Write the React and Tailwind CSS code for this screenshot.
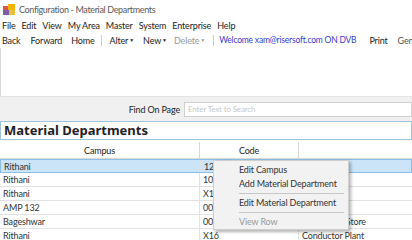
import React from "react";

const rows = [
  ["Rithani", "123", ""],
  ["Rithani", "101", ""],
  ["Rithani", "X11", ""],
  ["AMP 132", "0001", ""],
  ["Bageshwar", "002", "Bageshwar Store"],
  ["Rithani", "X16", "Conductor Plant"],
];

export default function App() {
  return (
    <div className="relative w-[412px] h-[240px] overflow-hidden bg-white text-[#222] font-['Lato','Noto_Sans',sans-serif] text-[9px] tracking-[-0.15px] leading-none">
      {/* title bar */}
      <div className="h-[18px] flex items-center pl-[3px] gap-[4px] text-[#5a5a5a]">
        <svg width="12" height="11" viewBox="0 0 12 11">
          <rect x="0" y="2" width="5" height="4" fill="#d9534f" />
          <rect x="5" y="0" width="7" height="6" fill="#f0b400" />
          <rect x="0" y="6" width="6" height="5" fill="#7a5ca8" />
          <rect x="6" y="6" width="6" height="5" fill="#e8c040" />
        </svg>
        <span className="tracking-[-0.35px]">Configuration - Material Departments</span>
      </div>
      {/* menu bar */}
      <div className="h-[15px] flex items-center pl-[2px] gap-[6px] text-[#222]">
        <span>File</span>
        <span>Edit</span>
        <span>View</span>
        <span>My Area</span>
        <span>Master</span>
        <span>System</span>
        <span>Enterprise</span>
        <span>Help</span>
      </div>
      {/* toolbar */}
      <div className="h-[15px] w-[412px] overflow-hidden flex items-center pl-[2px] whitespace-nowrap [&>span]:shrink-0">
        <span>Back</span>
        <span className="ml-[10px]">Forward</span>
        <span className="ml-[9px]">Home</span>
        <span className="ml-[6px] w-px h-[11px] bg-[#ccc]"></span>
        <span className="ml-[8px]">Alter</span>
        <span className="text-[5px] ml-[1px]">▼</span>
        <span className="ml-[9px]">New</span>
        <span className="text-[5px] ml-[1px]">▼</span>
        <span className="ml-[7px] text-[#999]">Delete</span>
        <span className="text-[5px] ml-[1px] text-[#999]">▼</span>
        <span className="ml-[8px] w-px h-[11px] bg-[#ccc]"></span>
        <span className="ml-[5px] text-[#3a3ad0] text-[8.5px] tracking-[-0.2px]">Welcome xam@risersoft.com ON DVB</span>
        <span className="ml-[13px]">Print</span>
        <span className="ml-[10px] text-[#555]">General</span>
      </div>
      {/* blank area */}
      <div className="h-[48px] border-l border-[#d8d8d8]"></div>
      {/* find band */}
      <div className="h-[25px] bg-[#f0f0f0] border-t border-[#e4e4e4] flex items-center justify-end">
        <span className="mr-[4px] text-[#222]">Find On Page</span>
        <div className="w-[228px] h-[15px] bg-white border border-[#d0d0d0] flex items-center pl-[3px] text-[8px] text-[#c8c8c8]">
          Enter Text to Search
        </div>
      </div>
      {/* section title */}
      <div className="h-[19px] border border-[#9ec3dd] bg-white flex items-center pl-[3px] font-['Noto_Sans',sans-serif] font-bold text-[13px] tracking-normal text-[#222]">
        Material Departments
      </div>
      {/* table header */}
      <div className="mt-[2px] h-[17px] flex border-b border-[#d8d8d8] text-[#222]">
        <div className="w-[200px] flex items-center justify-center border-r border-[#d8d8d8]">Campus</div>
        <div className="w-[99px] flex items-center justify-center border-r border-[#d8d8d8]">Code</div>
        <div className="flex-1"></div>
      </div>
      {/* rows */}
      {rows.map((r, i) => (
        <div
          key={i}
          className={
            i === 0
              ? "h-[14px] flex bg-[#cce4f7] border border-[#8fbde3] text-[#333]"
              : "h-[14px] flex border-b border-[#e2e2e2] text-[#333]"
          }
        >
          <div className="w-[200px] flex items-center pl-[3px] border-r border-[#e2e2e2]">{r[0]}</div>
          <div className="w-[99px] flex items-center pl-[3px] border-r border-[#e2e2e2]">{r[1]}</div>
          <div className="flex-1 flex items-center pl-[3px]">{r[2]}</div>
        </div>
      ))}
      {/* context menu */}
      <div className="absolute left-[213px] top-[160px] w-[136px] h-[70px] bg-[#f2f2f2] border border-[#cfcfcf] shadow-[2px_2px_3px_rgba(0,0,0,0.3)] flex flex-col text-[#333]">
        <div className="h-[16px] flex items-center pl-[25px] pt-[2px]">Edit Campus</div>
        <div className="h-[15px] flex items-center pl-[25px]">Add Material Department</div>
        <div className="ml-[25px] mr-[4px] h-px bg-[#c8c8c8] my-[2px]"></div>
        <div className="h-[15px] flex items-center pl-[25px]">Edit Material Department</div>
        <div className="ml-[25px] mr-[4px] h-px bg-[#c8c8c8] my-[2px]"></div>
        <div className="h-[15px] flex items-center pl-[25px] text-[#999]">View Row</div>
      </div>
    </div>
  );
}
